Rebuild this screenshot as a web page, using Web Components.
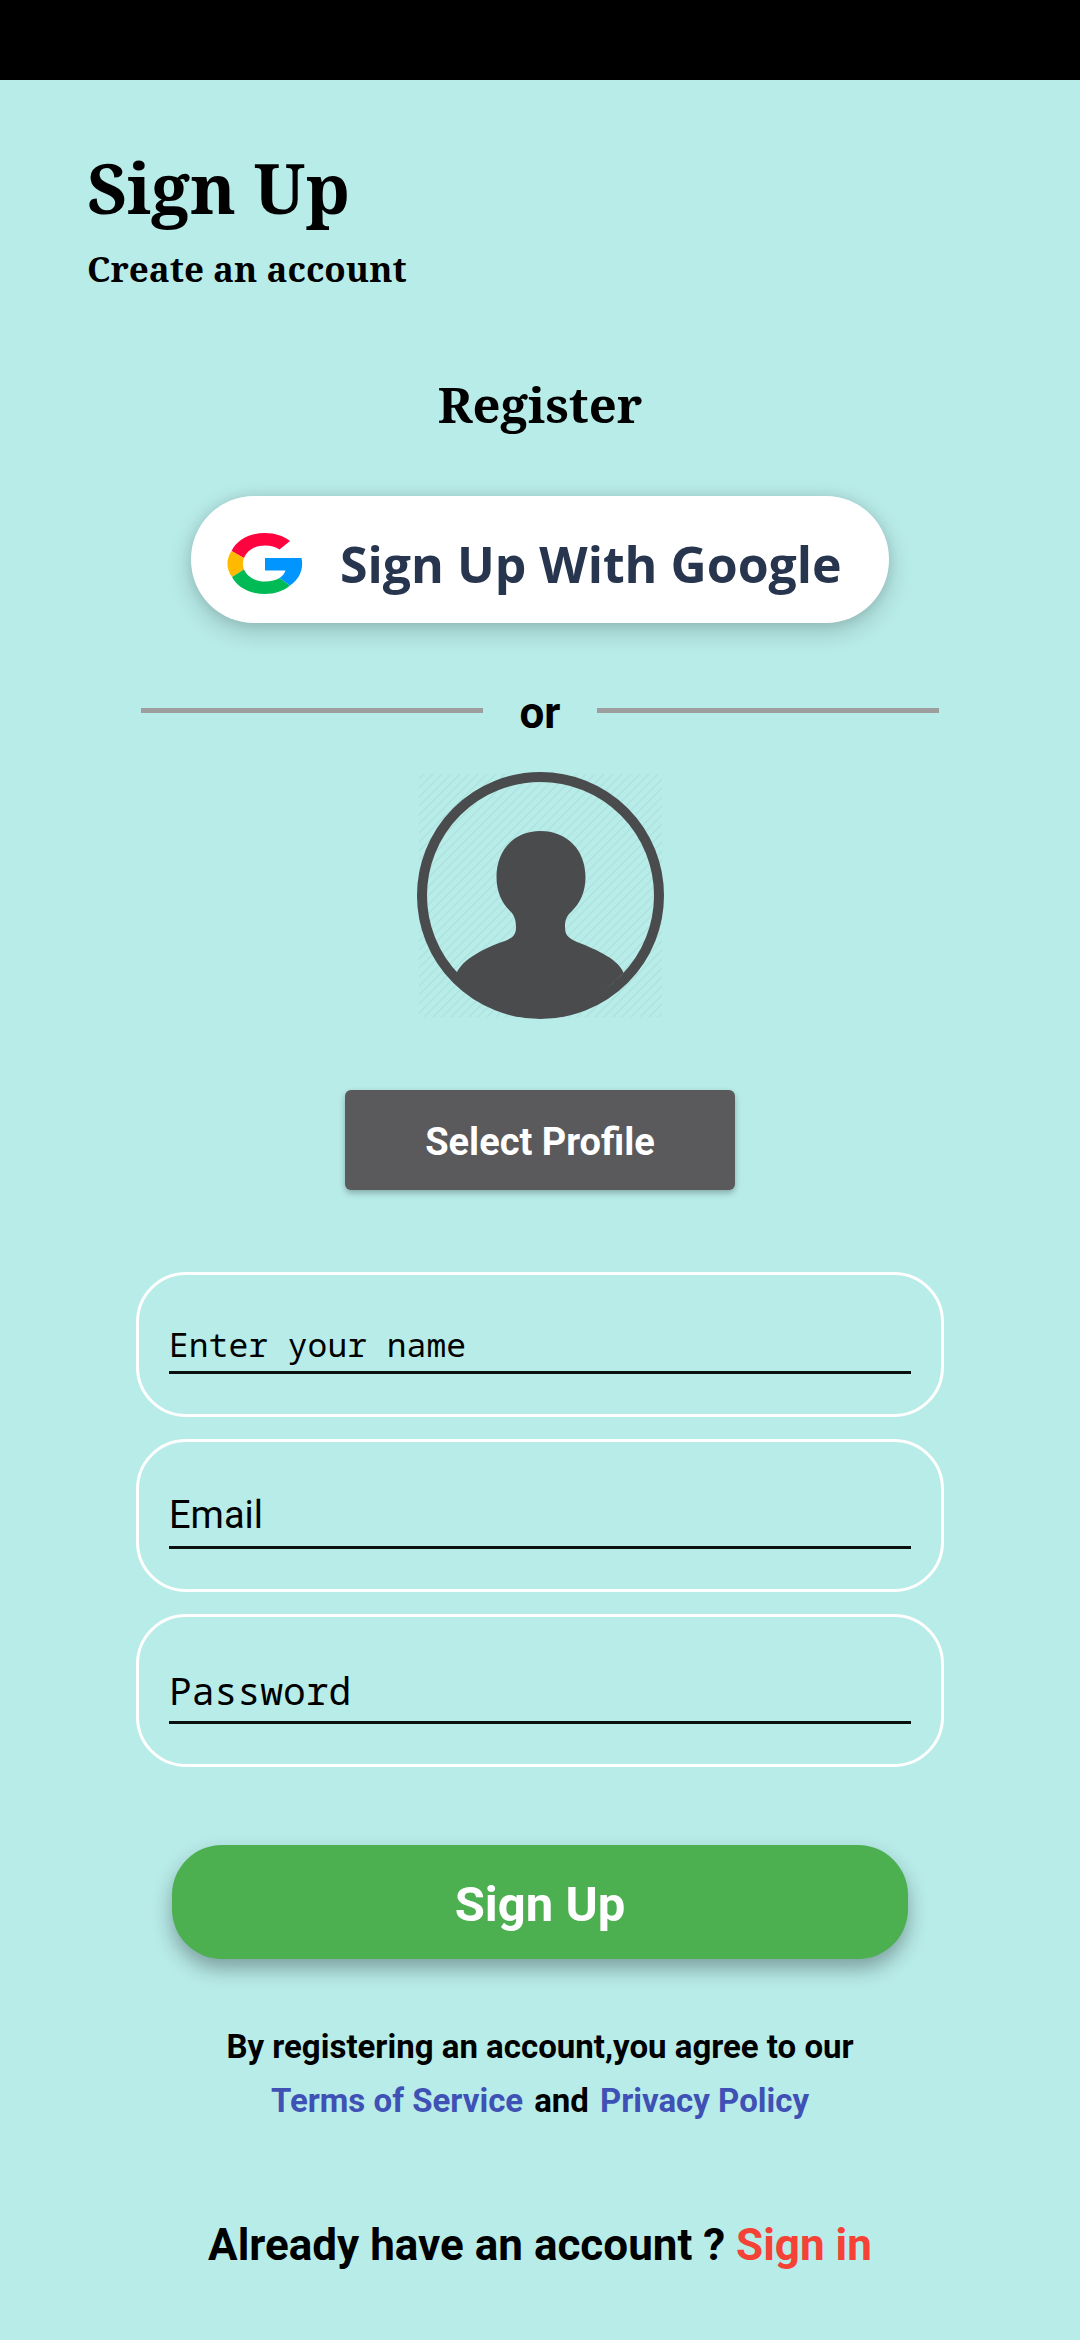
<!DOCTYPE html>
<html lang="en">
<head>
<meta charset="utf-8">
<meta name="viewport" content="width=device-width, initial-scale=1">
<title>Sign Up</title>
<style>
  html, body { margin: 0; min-height: 100%; background: #b8ece9; }
  body { font-family: Roboto, sans-serif; color: #000; }
</style>
</head>
<body>
<signup-page></signup-page>

<script>
function define(name, html, setup) {
  const template = document.createElement('template');
  template.innerHTML = html;
  customElements.define(name, class extends HTMLElement {
    connectedCallback() {
      if (this.shadowRoot) return;
      const root = this.attachShadow({ mode: 'open' });
      root.appendChild(template.content.cloneNode(true));
      if (setup) setup(this, root);
    }
  });
}

define('status-bar', `
  <style>:host { display: block; height: 80px; background: #000; }</style>`);

define('page-header', `
  <style>
    :host { display: block; padding: 62px 87px 0; font-family: "Noto Serif", "Liberation Serif", serif; font-weight: 700; }
    h1 { margin: 0; font-size: 69px; line-height: 90px; }
    p { margin: 10px 0 0; font-size: 35px; line-height: 54px; }
  </style>
  <h1><slot></slot></h1>
  <p><slot name="subtitle"></slot></p>`);

define('section-title', `
  <style>
    :host { display: block; margin-top: 73px; text-align: center; }
    h2 { margin: 0; font: 700 49px/70px "Noto Serif", "Liberation Serif", serif; }
  </style>
  <h2><slot></slot></h2>`);

define('google-button', `
  <style>
    :host { display: block; margin: 57px 191px 0; }
    button { display: flex; align-items: center; gap: 37px; width: 100%; height: 127px; padding: 8px 36px 0; box-sizing: border-box;
      border: 0; border-radius: 63px; background: #fff; color: #27364e; white-space: nowrap;
      font: 700 50px/64px "Open Sans", "Noto Sans", sans-serif;
      box-shadow: 0 8px 24px rgba(0,0,0,.2), 0 0 12px rgba(0,0,0,.08); }
    svg { flex: none; width: 76px; height: 61px; }
  </style>
  <button type="button">
    <svg viewBox="0 0 76 61" preserveAspectRatio="none" aria-hidden="true">
      <path fill="#ff033e" d="M4.500 18C10 7 23 0 38 0C48 0 57 3 63 8L52.500 16.500C48.500 14 44 12.500 38 12.500C28 12.500 20 17.500 17 25Z"/>
      <path fill="#ffba00" d="M4.500 18L17 25C15.500 28.500 15.500 33 17 36.500L5 44C-1 36-1 26 4.500 18Z"/>
      <path fill="#00bb55" d="M5 44L17 36.500C20 43.500 28 48.500 38 48.500C44 48.500 49 47 52.500 45L63 52.500C56.500 58 48 61 38 61C23 61 10.500 54.500 5 44Z"/>
      <path fill="#0095ff" d="M38 25H74.500C77 36 72 46.500 63 52.500L52.500 45C56 42.500 57.500 40.500 58.500 37.500H38Z"/>
    </svg>
    <span><slot></slot></span>
  </button>`);

define('or-divider', `
  <style>
    :host { display: flex; align-items: center; gap: 37px; margin: 64px 141px 0; font-size: 44px; line-height: 52px; font-weight: 700; }
    hr { flex: 1; height: 5px; margin: 0 0 5px; border: 0; background: #9e9e9e; }
  </style>
  <hr><span><slot></slot></span><hr>`);

define('profile-avatar', `
  <style>
    :host { display: flex; justify-content: center; margin-top: 33px; }
    svg { width: 247px; height: 247px; }
  </style>
  <svg viewBox="0 0 247 247" role="img" aria-label="Profile picture">
    <defs>
      <pattern id="hatch" width="9" height="9" patternUnits="userSpaceOnUse">
        <path d="M-1 10L10-1M-1 1L1-1M8 10L10 8" stroke="#aee2df" stroke-width="1.500"/>
      </pattern>
    </defs>
    <rect x="2" y="2" width="243" height="243" fill="url(#hatch)"/>
    <circle cx="123.500" cy="123.500" r="118.500" fill="none" stroke="#4a4b4c" stroke-width="10"/>
    <path fill="#4a4b4c" d="M123.500 59C150 59 168.500 78 168.500 105C168.500 120 163 131 155 139C149 144 148 149 148 155C148 163 151 166 160 170C181 178 202 188 206.500 201A112 112 0 0 1 39.500 201C46 187 67 176 88 169C96 165.500 99 163 99 155C99 149 97.500 143 93 139C85 131 79.500 120 79.500 105C79.500 78 97 59 123.500 59Z"/>
  </svg>`);

define('profile-button', `
  <style>
    :host { display: flex; justify-content: center; margin-top: 71px; }
    button { padding: 26px 80px 22px; border: 0; border-radius: 6px; background: #5a595b; color: #fff;
      font: 700 38px/52px Roboto, sans-serif; box-shadow: 0 3px 6px rgba(0,0,0,.28); }
  </style>
  <button type="button"><slot></slot></button>`);

define('text-field', `
  <style>
    :host { display: block; box-sizing: border-box; border: 3px solid #fff; border-radius: 50px; padding: 40px 30px; }
    input { display: block; width: 100%; box-sizing: border-box; margin: 0; padding: 2px 0 0; border: 0; border-bottom: 3px solid #0a0f0f;
      border-radius: 0; outline: 0; background: none; color: #000; height: 67px; font: 400 38px/44px Roboto, sans-serif; }
    :host([mono]) input { font-family: "Noto Sans Mono", "DejaVu Sans Mono", monospace; }
    :host([compact]) input { height: 59px; font-size: 33px; line-height: 40px; }
    input::placeholder { color: #000; opacity: 1; }
  </style>
  <input>`, (host, root) => {
    const input = root.querySelector('input');
    input.type = host.getAttribute('type') || 'text';
    input.placeholder = host.getAttribute('label');
    input.setAttribute('aria-label', host.getAttribute('label'));
  });

define('signup-form', `
  <style>
    :host { display: block; margin-top: 82px; }
    .fields { display: flex; flex-direction: column; gap: 22px; margin: 0 136px; }
    .action { margin: 78px 172px 0; }
  </style>
  <form>
    <div class="fields"><slot></slot></div>
    <div class="action"><slot name="action"></slot></div>
  </form>`);

define('primary-button', `
  <style>
    :host { display: block; }
    button { display: block; width: 100%; padding: 30px 0 24px; border: 0; border-radius: 50px; background: #4caf50; color: #fff;
      font: 700 49px/60px Roboto, sans-serif; box-shadow: 0 10px 20px rgba(0,0,0,.32); }
  </style>
  <button type="submit"><slot></slot></button>`);

define('terms-note', `
  <style>
    :host { display: block; margin-top: 61px; text-align: center; font-size: 33px; line-height: 54px; font-weight: 700; }
    p { margin: 0; }
    .links { display: flex; justify-content: center; gap: 11px; }
    a { color: #3f51b5; text-decoration: none; }
  </style>
  <p>By registering an account,you agree to our</p>
  <p class="links"><a href="#terms">Terms of Service</a><span>and</span><a href="#privacy">Privacy Policy</a></p>`);

define('signin-prompt', `
  <style>
    :host { display: block; margin-top: 91px; padding-bottom: 40px; text-align: center; font-size: 44px; line-height: 52px; font-weight: 700; }
    p { margin: 0; }
    a { color: #f44336; text-decoration: none; }
  </style>
  <p>Already have an account ? <a href="#signin">Sign in</a></p>`);

define('signup-page', `
  <style>:host { display: block; }</style>
  <status-bar></status-bar>
  <main>
    <page-header>Sign Up<span slot="subtitle">Create an account</span></page-header>
    <section-title>Register</section-title>
    <google-button>Sign Up With Google</google-button>
    <or-divider>or</or-divider>
    <profile-avatar></profile-avatar>
    <profile-button>Select Profile</profile-button>
    <signup-form>
      <text-field mono compact label="Enter your name"></text-field>
      <text-field type="email" label="Email"></text-field>
      <text-field mono type="password" label="Password"></text-field>
      <primary-button slot="action">Sign Up</primary-button>
    </signup-form>
    <terms-note></terms-note>
    <signin-prompt></signin-prompt>
  </main>`);
</script>
</body>
</html>
